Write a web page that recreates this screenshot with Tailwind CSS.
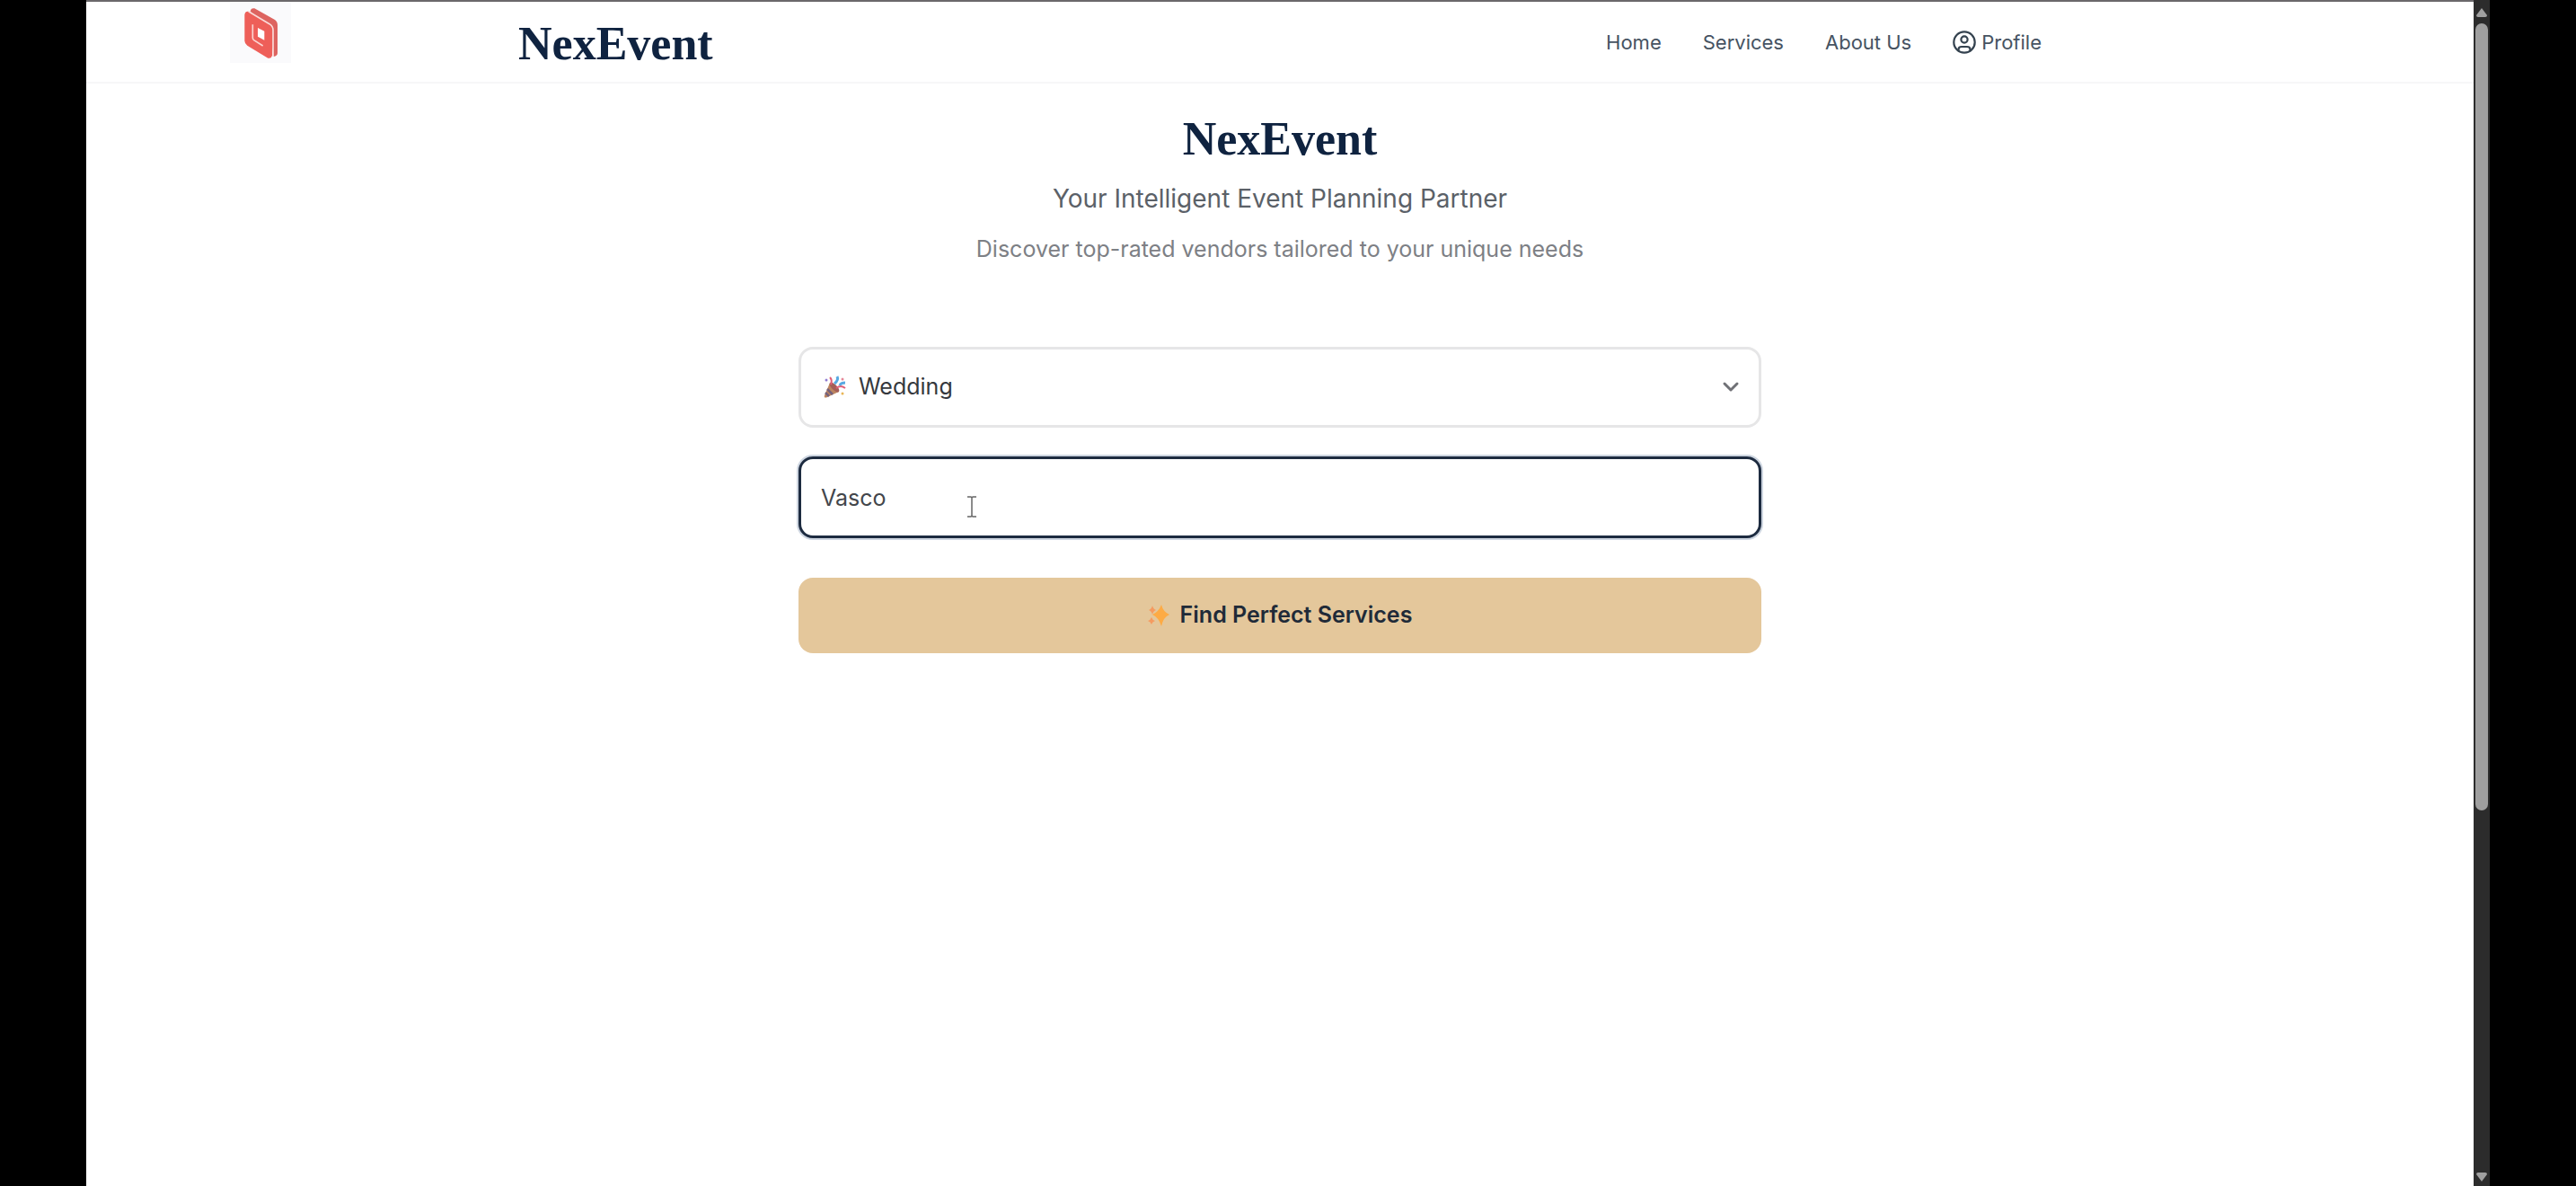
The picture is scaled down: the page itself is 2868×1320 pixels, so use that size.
<!DOCTYPE html>
<html lang="en">
<head>
<meta charset="utf-8">
<title>NexEvent</title>
<script src="https://cdn.jsdelivr.net/npm/@tailwindcss/browser@4"></script>
</head>
<body class="bg-black font-['Inter',sans-serif]">
<div class="flex min-h-screen px-24">
  <div class="relative flex-1 border-t-2 border-[#6b686b] bg-white">
    <div class="absolute left-[160px] top-0 h-[68px] w-[68px] bg-[#fafafc]">
      <svg class="size-full" viewBox="18 6 204 204" aria-label="Company logo" role="img">
        <path d="M86 38 Q88 26 100 28 L168 66 Q177 72 177 84 V178 Q176 188 164 189 L150 100 Z" fill="#dd6460"/>
        <path d="M67 50 Q68 36 82 39 L148 81 Q159 88 159 100 V184 Q157 197 145 194 L76 152 Q67 146 67 136 Z" fill="#ee5f59"/>
        <path d="M80 38 L150 80 Q162 88 162 100 V188" fill="none" stroke="#fbdad8" stroke-width="5"/>
        <path d="M94 82 V126 Q94 131 98 134 L128 153" fill="none" stroke="#fbd5d2" stroke-width="5"/>
        <path d="M111 93 L133 104 V134 L111 122 Z" fill="#fff"/>
      </svg>
    </div>
    <header class="border-b-2 border-[#f7f7f8]">
      <div class="mx-auto flex h-[89px] max-w-[1696px] items-center justify-between">
        <a href="#" class="pt-1 font-['Liberation_Serif',serif] text-[52px] font-bold leading-[60px] text-[#0f2340]">NexEvent</a>
        <nav class="flex items-center gap-[46px] text-[22px] leading-8 text-[#465362]">
          <a href="#">Home</a>
          <a href="#">Services</a>
          <a href="#">About Us</a>
          <a href="#" class="flex items-center gap-[6px]">
            <svg class="size-[26px]" viewBox="0 0 26 26" fill="none" stroke="#34424f" stroke-width="2.2" aria-hidden="true">
              <circle cx="13" cy="13" r="11.7"/><circle cx="13" cy="10" r="3.6"/><path d="M6.5 22.5 V21 Q6.5 18 10 18 H16 Q19.500 18 19.500 21 V22.500"/>
            </svg>
            Profile
          </a>
        </nav>
      </div>
    </header>
    <main class="mx-auto max-w-[1072px] pt-8">
      <div class="text-center">
        <h1 class="font-['Liberation_Serif',serif] text-[52px] font-bold leading-[60px] text-[#0f2340]">NexEvent</h1>
        <p class="mt-4 text-[28px] leading-10 text-[#5b6168]">Your Intelligent Event Planning Partner</p>
        <p class="mt-4 text-[25px] leading-10 text-[#7d8085]">Discover top-rated vendors tailored to your unique needs</p>
      </div>
      <form class="mt-[89px]">
        <div class="relative">
          <select aria-label="Event type" class="block h-[90px] w-full appearance-none rounded-2xl border-[3px] border-[#e6e6e7] bg-white pl-16 pr-16 text-[25px] text-[#35383d]">
            <option>Wedding</option>
          </select>
          <svg class="pointer-events-none absolute left-7 top-8 size-[26px]" viewBox="0 0 26 26" fill="none" aria-hidden="true">
            <path d="M7 8 L17 18 L3 24.500 Q0 25 1 22 Z" fill="#bd8560"/>
            <path d="M4 15 L10 21 M2 19 L6 23" stroke="#74617d" stroke-width="2.500"/>
            <ellipse cx="12" cy="13" rx="3" ry="7" transform="rotate(-45 12 13)" fill="#a45e57"/>
            <path d="M7 2 Q10 5 8 10 M14 14 Q19 10 24 14" stroke="#e05f77" stroke-width="2"/>
            <path d="M15 1 Q17 5 12 9 M18 11 Q19 8 24 8" stroke="#58a9e2" stroke-width="3"/>
            <circle cx="3" cy="5" r="1.500" fill="#8f7bd1"/><circle cx="21" cy="4" r="1.500" fill="#e58899"/><circle cx="21" cy="20" r="1.500" fill="#e9b657"/>
          </svg>
          <svg class="pointer-events-none absolute right-6 top-[34px] size-5" viewBox="0 0 20 20" fill="none" stroke="#707176" stroke-width="3" stroke-linecap="round" stroke-linejoin="round" aria-hidden="true"><path d="M3 7 L10 14 L17 7"/></svg>
        </div>
        <div class="relative mt-8">
          <input type="text" value="Vasco" aria-label="Location" class="block h-[91px] w-full rounded-2xl border-[3px] border-[#1d2b40] bg-white px-[22px] text-[25px] text-[#43464b] outline-none ring-2 ring-[#cdd5e0]">
          <svg class="pointer-events-none absolute left-[187px] top-11 h-6 w-3" viewBox="0 0 12 24" fill="none" stroke="#666" stroke-width="1.500" aria-hidden="true"><path d="M1 1 H5 L6 2 L7 1 H11 M6 2 V22 M1 23 H5 L6 22 L7 23 H11"/></svg>
        </div>
        <button type="button" class="mt-11 flex h-[84px] w-full items-center justify-center gap-3 rounded-2xl bg-[#e4c79b] text-[25px] font-semibold text-[#202a38]">
          <svg class="size-6" viewBox="0 0 24 24" aria-hidden="true">
            <path d="M15 0 Q17 8 24 11 Q17 14 15 24 Q12 14 5 11 Q12 8 15 0Z" fill="#fdab45"/>
            <path d="M5 1 Q6 5 9 6 Q6 7 5 11 Q4 7 1 6 Q4 5 5 1Z M4 14 Q5 17 8 18 Q5 19 4 22 Q3 19 0 18 Q3 17 4 14Z" fill="#f59b60"/>
          </svg>
          Find Perfect Services
        </button>
      </form>
    </main>
  </div>
  <div class="flex w-[18px] flex-col items-center bg-[#2c2c2c] pb-1 pt-2" aria-hidden="true">
    <svg class="h-3 w-[14px]" viewBox="0 0 14 12"><path d="M7 1 L13 9 Q13 11 11 11 H3 Q1 11 1 9Z" fill="#a0a0a0"/></svg>
    <div class="mt-[6px] h-[876px] w-[14px] rounded-full bg-[#9f9f9f]"></div>
    <svg class="mt-auto h-3 w-[14px]" viewBox="0 0 14 12"><path d="M7 11 L13 3 Q13 1 11 1 H3 Q1 1 1 3Z" fill="#a0a0a0"/></svg>
  </div>
</div>
</body>
</html>
